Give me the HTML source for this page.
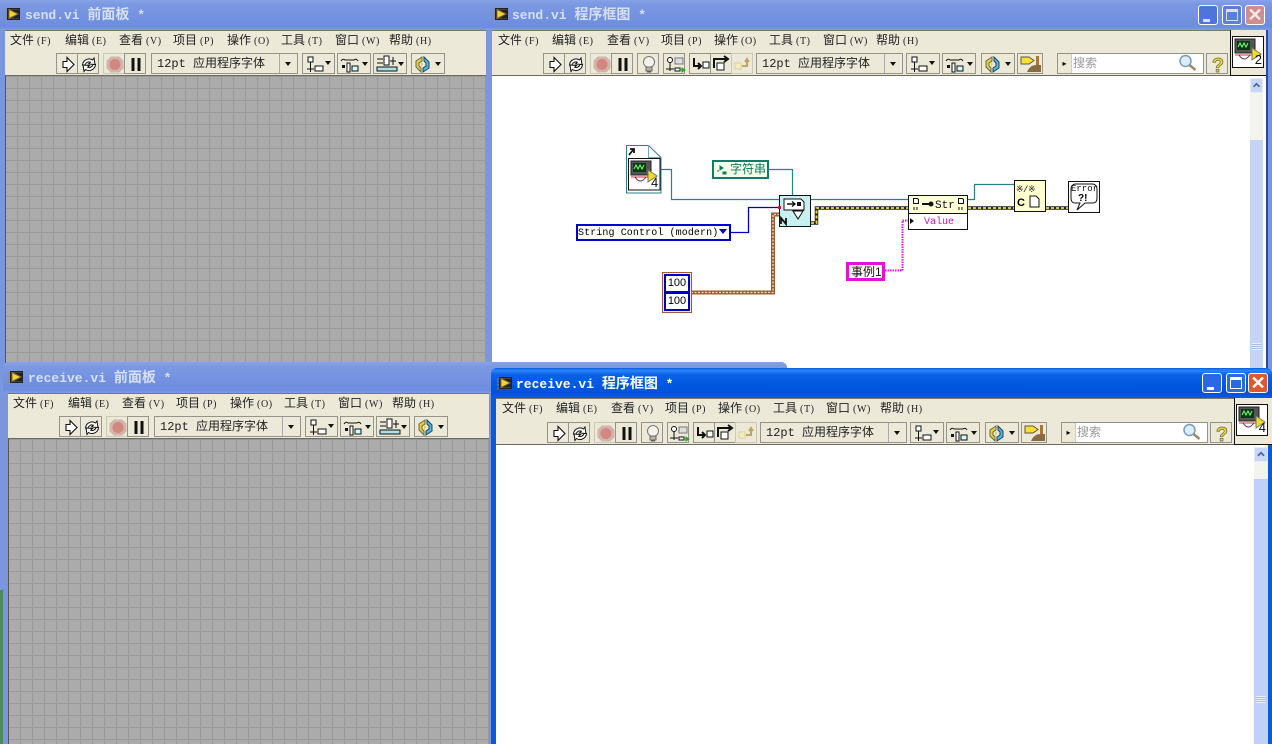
<!DOCTYPE html>
<html><head><meta charset="utf-8"><style>
html,body{margin:0;padding:0;width:1272px;height:744px;overflow:hidden;background:#7a96df}
*{box-sizing:border-box}
.win{position:absolute;overflow:hidden}
.tb{position:absolute;left:0;right:0;top:0;height:30px;background:linear-gradient(#86a2e8,#7b98e2 15%,#7391e0 60%,#6e8cdd 90%,#7f9be4)}
.tb.a{background:linear-gradient(#0a5ae0,#2a86f8 8%,#0b62e8 22%,#0057e0 60%,#0052d8 85%,#0a5ee8)}
.tt{position:absolute;top:6px;color:#d6e0f7;font:bold 13px/16px "Liberation Mono","Noto Sans CJK SC",monospace;white-space:pre}
.tb.a .tt{color:#fff}
.tt b{font:bold 14px/16px "Liberation Sans","Noto Sans CJK SC",sans-serif}
.menu{position:absolute;top:30px;height:21px;background:#ece9d8;border-top:1px solid #77776a}
.menu span{position:absolute;top:1px;font:12px/16px "Liberation Sans","Noto Sans CJK SC",sans-serif;color:#222;white-space:pre}
.menu i{font:normal 10px/16px "Liberation Serif",serif;letter-spacing:.6px;margin-left:3px}
.bar{position:absolute;top:51px;height:25px;background:#ece9d8;border-bottom:1px solid #6a6a60}
.b{position:absolute;top:2px;height:21px;border:1px solid #94948a;background:#ece9d8}
.b svg{position:absolute;left:0;top:0}
.ft{font:12px/19px "Liberation Mono","Noto Sans CJK SC",monospace;color:#222;padding-left:5px;white-space:pre}
.ft b{font:12px/19px "Liberation Sans","Noto Sans CJK SC",sans-serif}
.dd{position:absolute;right:0;top:0;bottom:0;width:18px;border-left:1px solid #aaa}
.dd:after{content:"";position:absolute;left:5px;top:8px;border:3px solid transparent;border-top:4px solid #111;border-bottom:0}
.grid{position:absolute;background-color:#ababab;background-image:repeating-linear-gradient(90deg,#9a9a9a 0 1px,transparent 1px 12px),repeating-linear-gradient(180deg,#9a9a9a 0 1px,transparent 1px 12px);background-position:-1px 0}
.wb{position:absolute;width:20px;height:20px;border-radius:3px;border:1px solid #fff}
.abs{position:absolute}
.dg{font:10px/14px "Liberation Mono",monospace;white-space:pre;color:#111}
.num{position:absolute;right:1px;top:16px;font:13px/14px "Liberation Sans",sans-serif;color:#111}
</style></head><body>
<svg width="0" height="0" style="position:absolute">
<symbol id="ti" viewBox="0 0 16 16"><rect x="2" y="2" width="13" height="12" fill="#222"/><path d="M0 4h2M0 7h2M0 10h2M0 13h2" stroke="#a83" /><path d="M3 3h11v1H3zM3 12h11v1H3z" fill="#443"/><path d="M4 3.500l9 4.500-9 4.500z" fill="#f2d81e" stroke="#865"/></symbol>
<symbol id="run" viewBox="0 0 22 21"><path d="M6 7.500h4V3.500l7 7-7 7v-4H6z" fill="#fff" stroke="#111" stroke-width="1.100"/></symbol>
<symbol id="cont" viewBox="0 0 22 21"><path d="M4.500 11a6.500 6.500 0 0 1 10-5l1.500-2 1 6.500-6.500-.5 1.800-1.800A4 4 0 0 0 7 11z" fill="#fff" stroke="#111"/><path d="M17.500 10.500a6.500 6.500 0 0 1-10 5L6 17.500 5 11l6.500.5-1.800 1.800A4 4 0 0 0 15 10.500z" fill="#fff" stroke="#111"/></symbol>
<symbol id="abort" viewBox="0 0 22 21"><path d="M7 3h8l4 4v7l-4 4H7l-4-4V7z" fill="#dcb0a8" stroke="#c4bcb0"/><circle cx="11" cy="10.500" r="5.500" fill="#d08880"/></symbol>
<symbol id="pause" viewBox="0 0 22 21"><path d="M6.500 4h3v13h-3zM12.500 4h3v13h-3z" fill="#111"/></symbol>
<symbol id="bulb" viewBox="0 0 22 21"><circle cx="11" cy="8" r="5.500" fill="#f4f2ea" stroke="#777"/><path d="M8 13h6v4H8z" fill="#b8b4a4" stroke="#666"/><path d="M9 18h4" stroke="#555"/></symbol>
<symbol id="probe" viewBox="0 0 22 21"><circle cx="6" cy="6" r="2.500" fill="#fff" stroke="#111"/><path d="M6 9v8M2 15h8" stroke="#111"/><path d="M11 4h8v6h-8z" fill="#ddd" stroke="#777"/><path d="M11 14h5v3h-5z" fill="#fff" stroke="#111"/><path d="M16 16h3M18 14l3 2-3 2z" fill="#2a2" stroke="#2a2"/></symbol>
<symbol id="si" viewBox="0 0 22 21"><path d="M4 4v8h6M8 9l3 3-3 3" fill="none" stroke="#111" stroke-width="2"/><rect x="13" y="8" width="6" height="6" fill="#fff" stroke="#111"/></symbol>
<symbol id="so" viewBox="0 0 22 21"><path d="M3 14V5h13M13 2l4 3-4 3" fill="none" stroke="#111" stroke-width="2"/><rect x="6" y="9" width="7" height="7" fill="#fff" stroke="#111"/></symbol>
<symbol id="se" viewBox="0 0 22 21"><rect x="3" y="9" width="6" height="6" fill="#f4eebc" stroke="#d8d098"/><path d="M10 12h5V6M13 8l2-3 2 3" fill="none" stroke="#b8a868" stroke-width="2"/></symbol>
<symbol id="align" viewBox="0 0 32 21"><rect x="5" y="3" width="5" height="5" fill="#fff" stroke="#111"/><path d="M7.500 8v10M4 15h7" stroke="#111"/><rect x="12" y="12" width="8" height="5" fill="#fff" stroke="#111"/><path d="M22 7l3 4 3-4z" fill="#111"/></symbol>
<symbol id="dist" viewBox="0 0 32 21"><path d="M3 7q2-3 4-1h9q2-2 4 1" fill="none" stroke="#111"/><path d="M4 11h3v3H4z" fill="#111"/><path d="M9 9h3v9H9z" fill="#fff" stroke="#111"/><path d="M14 12h6v5h-6z" fill="#cff" stroke="#111"/><path d="M24 8l3 4 3-4z" fill="#111"/></symbol>
<symbol id="res" viewBox="0 0 32 21"><path d="M3 5h6M3 9h6" stroke="#111"/><path d="M10 2h5v9h-5z" fill="#fff" stroke="#111"/><path d="M16 7h6M19 3v8" stroke="#111"/><path d="M3 13h20v4H3z" fill="#aee0e8" stroke="#111"/><path d="M24 8l3 4 3-4z" fill="#111"/></symbol>
<symbol id="reord" viewBox="0 0 32 21"><path d="M10 3L4 7v6l5 5v-4l-2-2V9l3-2z" fill="#e8d030" stroke="#665"/><path d="M11 18l6-4V8l-5-5v4l2 2v3l-3 2z" fill="#50b8e0" stroke="#245"/><path d="M9 8l2 2-2 3z" fill="#e8d030"/><path d="M23 8l3 4 3-4z" fill="#111"/></symbol>
<symbol id="clean" viewBox="0 0 26 21"><path d="M3 3h8l5 3.500-5 3.500H3z" fill="#f4e030" stroke="#654"/><path d="M18 2h3v9h-3z" fill="#a87838"/><path d="M10 16q3-5 8-5h5v7H9z" fill="#8a6a40"/></symbol>
<symbol id="help" viewBox="0 0 22 21"><text x="11" y="18" text-anchor="middle" font-family="Liberation Sans" font-weight="bold" font-size="20" fill="#eed820" stroke="#665" stroke-width=".7">?</text></symbol>
<symbol id="mag" viewBox="0 0 20 18"><circle cx="7.500" cy="7" r="5.500" fill="#dcecf8" stroke="#7a9ab8" stroke-width="1.500"/><path d="M11.500 11l6 5" stroke="#a08868" stroke-width="2.500"/></symbol>
<symbol id="vi" viewBox="0 0 30 30"><rect x="2" y="2" width="20" height="14" fill="#555" stroke="#222"/><rect x="4" y="4" width="13" height="9" fill="#0a3a12"/><path d="M5 10l2-4 2 4 2-4 2 4 2-4" stroke="#7f7" fill="none"/><path d="M2 18h26" stroke="#c33"/><path d="M6 18q5 8 11 0" stroke="#626" fill="none"/><path d="M19 11v12l9-6z" fill="#f2dc20" stroke="#776"/></symbol>
<symbol id="up" viewBox="0 0 13 15"><path d="M3 9l3.500-3.500L10 9" fill="none" stroke="#4a66a4" stroke-width="2"/></symbol>
</svg>

<!-- send front panel -->
<div class="win" style="left:0;top:0;width:487px;height:363px;background:#7a96df">
<div class="tb"><svg class="abs" style="left:5px;top:6px" width="16" height="16"><use href="#ti"/></svg><div class="tt" style="left:25px">send.vi <b>前面板</b> *</div></div>
<div class="menu" style="left:5px;width:481px"><span style="left:5px">文件<i>(F)</i></span><span style="left:60px">编辑<i>(E)</i></span><span style="left:114px">查看<i>(V)</i></span><span style="left:168px">项目<i>(P)</i></span><span style="left:222px">操作<i>(O)</i></span><span style="left:276px">工具<i>(T)</i></span><span style="left:330px">窗口<i>(W)</i></span><span style="left:384px">帮助<i>(H)</i></span></div>
<div class="bar" style="left:5px;width:481px">
<div class="b" style="left:51px;width:22px"><svg width="22" height="21"><use href="#run"/></svg></div><div class="b" style="left:72px;width:22px"><svg width="22" height="21"><use href="#cont"/></svg></div>
<div class="b" style="left:98px;width:22px;border-color:#ccc8b8"><svg width="22" height="21"><use href="#abort"/></svg></div><div class="b" style="left:119px;width:22px"><svg width="22" height="21"><use href="#pause"/></svg></div>
<div class="b ft" style="left:146px;width:147px">12pt <b>应用程序字体</b><div class="dd"></div></div>
<div class="b" style="left:297px;width:33px"><svg width="32" height="21"><use href="#align"/></svg></div><div class="b" style="left:332px;width:34px"><svg width="32" height="21"><use href="#dist"/></svg></div><div class="b" style="left:368px;width:34px"><svg width="32" height="21"><use href="#res"/></svg></div><div class="b" style="left:406px;width:34px"><svg width="32" height="21"><use href="#reord"/></svg></div></div>
<div class="grid" style="left:5px;top:76px;width:481px;height:290px;border-left:1px solid #555"></div>
</div>

<!-- send block diagram -->
<div class="win" style="left:487px;top:0;width:785px;height:368px;background:#7a96df">
<div class="tb"><svg class="abs" style="left:6px;top:6px" width="16" height="16"><use href="#ti"/></svg><div class="tt" style="left:25px">send.vi <b>程序框图</b> *</div>
<div class="wb" style="left:711px;top:5px;background:#4f74dc"><div class="abs" style="left:4px;top:13px;width:7px;height:3px;background:#dde"></div></div>
<div class="wb" style="left:735px;top:5px;background:#5a7fe0"><div class="abs" style="left:3px;top:3px;width:12px;height:12px;border:1px solid #dde;border-top-width:3px"></div></div>
<div class="wb" style="left:758px;top:5px;background:#cf8d8e;color:#f4eaea;font:bold 18px/18px 'Liberation Sans',sans-serif;text-align:center">✕</div></div>
<div class="menu" style="left:5px;width:776px"><span style="left:6px">文件<i>(F)</i></span><span style="left:60px">编辑<i>(E)</i></span><span style="left:115px">查看<i>(V)</i></span><span style="left:169px">项目<i>(P)</i></span><span style="left:222px">操作<i>(O)</i></span><span style="left:277px">工具<i>(T)</i></span><span style="left:331px">窗口<i>(W)</i></span><span style="left:384px">帮助<i>(H)</i></span></div>
<div class="bar" style="left:5px;width:776px">
<div class="b" style="left:51px;width:22px"><svg width="22" height="21"><use href="#run"/></svg></div><div class="b" style="left:72px;width:22px"><svg width="22" height="21"><use href="#cont"/></svg></div>
<div class="b" style="left:98px;width:22px;border-color:#ccc8b8"><svg width="22" height="21"><use href="#abort"/></svg></div><div class="b" style="left:119px;width:22px"><svg width="22" height="21"><use href="#pause"/></svg></div>
<div class="b" style="left:145px;width:22px"><svg width="22" height="21"><use href="#bulb"/></svg></div><div class="b" style="left:171px;width:22px"><svg width="22" height="21"><use href="#probe"/></svg></div>
<div class="b" style="left:197px;width:22px"><svg width="22" height="21"><use href="#si"/></svg></div><div class="b" style="left:218px;width:22px"><svg width="22" height="21"><use href="#so"/></svg></div><div class="b" style="left:239px;width:22px;border-color:#ccc8b8"><svg width="22" height="21"><use href="#se"/></svg></div>
<div class="b ft" style="left:264px;width:147px">12pt <b>应用程序字体</b><div class="dd"></div></div>
<div class="b" style="left:414px;width:34px"><svg width="32" height="21"><use href="#align"/></svg></div><div class="b" style="left:450px;width:34px"><svg width="32" height="21"><use href="#dist"/></svg></div><div class="b" style="left:489px;width:34px"><svg width="32" height="21"><use href="#reord"/></svg></div><div class="b" style="left:525px;width:26px"><svg width="26" height="21"><use href="#clean"/></svg></div>
<div class="b" style="left:565px;width:147px;background:#fff"><div class="abs" style="left:0;top:0;width:14px;height:19px;background:#ece9d8;border-right:1px solid #ccc;font:8px/19px sans-serif;text-align:center">▸</div><div class="abs" style="left:15px;top:1px;font:12px/17px 'Liberation Sans','Noto Sans CJK SC',sans-serif;color:#999">搜索</div><svg class="abs" style="left:120px;top:0" width="20" height="18"><use href="#mag"/></svg></div>
<div class="b" style="left:714px;width:22px"><svg width="22" height="21"><use href="#help"/></svg></div></div>
<div class="abs" style="left:743px;top:30px;width:38px;height:46px;background:#ece9d8;border-left:1px solid #111;border-bottom:1px solid #111"><div class="abs" style="left:1px;top:6px;width:32px;height:32px;background:#fff;border:1px solid #111"><svg width="30" height="30"><use href="#vi"/></svg><div class="num">2</div></div></div>
<div class="abs" style="left:5px;top:76px;width:774px;height:292px;background:#fff"></div>
<svg class="abs" style="left:763px;top:78px;background:#c9d7f6;border:1px solid #e4ebfa" width="13" height="15"><use href="#up"/></svg>
<div class="abs" style="left:763px;top:93px;width:13px;height:47px;background:#f4f4ee"></div>
<div class="abs" style="left:763px;top:140px;width:13px;height:228px;background:#c5d3f5"></div>
<div class="abs" style="left:765px;top:343px;width:9px;height:7px;background:repeating-linear-gradient(#eef 0 1px,#aabbe4 1px 2px)"></div>
<div class="abs" style="left:779px;top:30px;width:2px;height:338px;background:#2b48a8"></div>
</div>

<!-- diagram -->
<svg class="abs" style="left:0;top:0" width="1272" height="368" fill="none">
<path d="M661 169.500h10.500v30h108M769 169.500h23.500v26M811 199.500h97M968 199.500h6.500v-15h39.500" stroke="#2b7f86" stroke-width="1.200"/>
<path d="M731 232.500h17.500v-25h31" stroke="#0000c8" stroke-width="1.300"/>
<path d="M691 292.500h82v-78h6" stroke="#a05a30" stroke-width="4"/>
<path d="M691 292.500h82v-78h6" stroke="#f0e0c8" stroke-width="1.300" stroke-dasharray="2 1.500"/>
<path d="M811 223h5.500v-15h91.500M968 208h46M1046 208h22" stroke="#222" stroke-width="3.500"/>
<path d="M811 223h5.500v-15h91.500M968 208h46M1046 208h22" stroke="#e8e040" stroke-width="1.800" stroke-dasharray="3 2"/>
<path d="M885 270.500h17.500v-50h5.500" stroke="#e810d8" stroke-width="2" stroke-dasharray="1.500 1"/>
<path d="M626.500 145.500h22l12.500 12v35.500h-34.500z" fill="#fff" stroke="#2b7f86"/><path d="M648.500 145.500v12h12" stroke="#7aa"/>
<path d="M629 155l4-5M630 149h4v4" stroke="#111" stroke-width="1.800"/>
<rect x="628.500" y="158.500" width="31.500" height="31.500" fill="#fff" stroke="#111"/>
</svg>
<svg class="abs" style="left:629px;top:159px" width="30" height="30"><use href="#vi"/></svg>
<div class="abs" style="left:651px;top:176px;font:13px/14px 'Liberation Sans',sans-serif;color:#111">4</div>
<div class="abs" style="left:712px;top:160px;width:57px;height:19px;background:#f4fbe8;border:2px solid #0f7c66;font:12px/15px 'Liberation Sans','Noto Sans CJK SC',sans-serif;color:#0e7a5f;padding-left:16px">字符串<svg class="abs" style="left:2px;top:3px" width="12" height="10"><path d="M1 6h2M4 1l3 2-3 2zM7 7h3v2H7z" fill="#0e7a5f" stroke="#0e7a5f"/></svg></div>
<div class="abs dg" style="left:576px;top:224px;width:155px;height:17px;background:#fff;border:2px solid #0000c8;line-height:15px;padding-left:0;font-size:10px;letter-spacing:.1px;color:#000">String Control (modern)<div class="abs" style="right:2px;top:3px;border:4px solid transparent;border-top:5px solid #0000c8;border-bottom:0"></div></div>
<div class="abs" style="left:662px;top:272px;width:30px;height:41px;background:#f4e8d8;border:1px solid #a05a30;padding:1px"><div style="width:26px;height:37px;background:#0000c0;padding:2px 2px"><div style="height:15px;background:#fff;font:11px/15px 'Liberation Sans',sans-serif;text-align:center;color:#000;margin-bottom:3px">100</div><div style="height:15px;background:#fff;font:11px/15px 'Liberation Sans',sans-serif;text-align:center;color:#000">100</div></div></div>
<div class="abs" style="left:779px;top:195px;width:32px;height:32px;background:#c8f0f2;border:1px solid #111"><svg width="30" height="30"><path d="M4 3h17l3 3v8H4z" fill="#fff" stroke="#111"/><path d="M7 8h7M12 5.500l3 2.500-3 2.500" stroke="#111" fill="none" stroke-width="1.400"/><rect x="17" y="6" width="4" height="4" fill="#111"/><path d="M13 15h10l-5 8z" fill="#fff" stroke="#111"/><path d="M1 28v-6l5 6v-6" stroke="#111" stroke-width="1.800" fill="none"/></svg></div>
<div class="abs" style="left:778px;top:206px;width:3px;height:3px;background:#c02040"></div>
<div class="abs" style="left:908px;top:195px;width:60px;height:35px;background:#fff;border:1px solid #111"><div class="abs" style="left:0;top:0;width:58px;height:18px;background:#ffffd8;border-bottom:1px solid #111"><svg class="abs" style="left:2px;top:1px" width="56" height="16"><path d="M2.500 1.500h4l1 1v4h-5zM47.500 1.500h4l1 1v4h-5z" fill="#fff" stroke="#111"/><path d="M3 10v3M6 10v3M48 10v3M51 10v3" stroke="#111"/><path d="M11 7h9" stroke="#111" stroke-width="2"/><circle cx="20" cy="7" r="2.500" fill="#111"/></svg><div class="abs dg" style="left:26px;top:3px;font-size:11px">Str</div></div><div class="abs dg" style="left:15px;top:20px;color:#d010c0">Value</div><div class="abs" style="left:1px;top:22px;border:3px solid transparent;border-left:4px solid #111"></div></div>
<div class="abs" style="left:1014px;top:180px;width:32px;height:32px;background:#ffffd0;border:1px solid #111"><div class="abs dg" style="left:1px;top:2px;font-size:9px;letter-spacing:-.5px">※/※</div><div class="abs" style="left:2px;top:15px;font:bold 11px/14px 'Liberation Sans',sans-serif">C</div><svg class="abs" style="left:13px;top:14px" width="14" height="14"><path d="M2 1h6l3 3v8H2z" fill="#fff" stroke="#111"/></svg></div>
<div class="abs" style="left:1068px;top:181px;width:32px;height:32px;background:#fff;border:1px solid #111"><svg class="abs" style="left:0;top:0" width="30" height="30"><path d="M6 2h18q4 1 4 5v9q0 5-4 5H16l-8 7 3-7H6q-4 0-4-5V7q0-4 4-5z" fill="#fff" stroke="#111"/></svg><div class="abs dg" style="left:2px;top:2px;font-size:9px;line-height:10px">Error</div><div class="abs" style="left:9px;top:11px;font:bold 10px/11px 'Liberation Sans',sans-serif">?!</div></div>
<div class="abs" style="left:846px;top:262px;width:39px;height:19px;background:#fff;border:3px solid #e810d8;font:12px/14px 'Liberation Sans','Noto Sans CJK SC',sans-serif;color:#111;padding-left:2px;white-space:nowrap">事例1</div>

<!-- receive front panel -->
<div class="win" style="left:3px;top:362px;width:784px;height:382px;background:#7a96df;border-radius:6px 6px 0 0">
<div class="tb" style="top:0;height:31px"><svg class="abs" style="left:5px;top:7px" width="16" height="16"><use href="#ti"/></svg><div class="tt" style="left:25px;top:7px">receive.vi <b>前面板</b> *</div></div>
<div class="menu" style="left:5px;width:481px;top:31px"><span style="left:5px">文件<i>(F)</i></span><span style="left:60px">编辑<i>(E)</i></span><span style="left:114px">查看<i>(V)</i></span><span style="left:168px">项目<i>(P)</i></span><span style="left:222px">操作<i>(O)</i></span><span style="left:276px">工具<i>(T)</i></span><span style="left:330px">窗口<i>(W)</i></span><span style="left:384px">帮助<i>(H)</i></span></div>
<div class="bar" style="left:5px;width:481px;top:52px">
<div class="b" style="left:51px;width:22px"><svg width="22" height="21"><use href="#run"/></svg></div><div class="b" style="left:72px;width:22px"><svg width="22" height="21"><use href="#cont"/></svg></div>
<div class="b" style="left:98px;width:22px;border-color:#ccc8b8"><svg width="22" height="21"><use href="#abort"/></svg></div><div class="b" style="left:119px;width:22px"><svg width="22" height="21"><use href="#pause"/></svg></div>
<div class="b ft" style="left:146px;width:147px">12pt <b>应用程序字体</b><div class="dd"></div></div>
<div class="b" style="left:297px;width:33px"><svg width="32" height="21"><use href="#align"/></svg></div><div class="b" style="left:332px;width:34px"><svg width="32" height="21"><use href="#dist"/></svg></div><div class="b" style="left:368px;width:34px"><svg width="32" height="21"><use href="#res"/></svg></div><div class="b" style="left:406px;width:34px"><svg width="32" height="21"><use href="#reord"/></svg></div></div>
<div class="grid" style="left:5px;top:77px;width:481px;height:305px;border-left:1px solid #555"></div>
</div>
<div class="abs" style="left:0;top:590px;width:3px;height:154px;background:#4f8a5a"></div>

<!-- receive block diagram -->
<div class="win" style="left:491px;top:368px;width:781px;height:376px;background:#0a5ae0;border-radius:6px 6px 0 0">
<div class="tb a"><svg class="abs" style="left:6px;top:7px" width="16" height="16"><use href="#ti"/></svg><div class="tt" style="left:25px;top:7px">receive.vi <b>程序框图</b> *</div>
<div class="wb" style="left:711px;top:5px;background:#2a68e8"><div class="abs" style="left:4px;top:13px;width:7px;height:3px;background:#fff"></div></div>
<div class="wb" style="left:735px;top:5px;background:#2a68e8"><div class="abs" style="left:3px;top:3px;width:12px;height:12px;border:1px solid #fff;border-top-width:3px"></div></div>
<div class="wb" style="left:757px;top:5px;background:#e0582e;color:#fff;font:bold 18px/18px 'Liberation Sans',sans-serif;text-align:center">✕</div></div>
<div class="menu" style="left:5px;width:776px;height:22px"><span style="left:6px">文件<i>(F)</i></span><span style="left:60px">编辑<i>(E)</i></span><span style="left:115px">查看<i>(V)</i></span><span style="left:169px">项目<i>(P)</i></span><span style="left:222px">操作<i>(O)</i></span><span style="left:277px">工具<i>(T)</i></span><span style="left:330px">窗口<i>(W)</i></span><span style="left:384px">帮助<i>(H)</i></span></div>
<div class="bar" style="left:5px;width:776px;top:52px">
<div class="b" style="left:51px;width:22px"><svg width="22" height="21"><use href="#run"/></svg></div><div class="b" style="left:72px;width:22px"><svg width="22" height="21"><use href="#cont"/></svg></div>
<div class="b" style="left:98px;width:22px;border-color:#ccc8b8"><svg width="22" height="21"><use href="#abort"/></svg></div><div class="b" style="left:119px;width:22px"><svg width="22" height="21"><use href="#pause"/></svg></div>
<div class="b" style="left:145px;width:22px"><svg width="22" height="21"><use href="#bulb"/></svg></div><div class="b" style="left:171px;width:22px"><svg width="22" height="21"><use href="#probe"/></svg></div>
<div class="b" style="left:197px;width:22px"><svg width="22" height="21"><use href="#si"/></svg></div><div class="b" style="left:218px;width:22px"><svg width="22" height="21"><use href="#so"/></svg></div><div class="b" style="left:239px;width:22px;border-color:#ccc8b8"><svg width="22" height="21"><use href="#se"/></svg></div>
<div class="b ft" style="left:264px;width:147px">12pt <b>应用程序字体</b><div class="dd"></div></div>
<div class="b" style="left:414px;width:34px"><svg width="32" height="21"><use href="#align"/></svg></div><div class="b" style="left:450px;width:34px"><svg width="32" height="21"><use href="#dist"/></svg></div><div class="b" style="left:489px;width:34px"><svg width="32" height="21"><use href="#reord"/></svg></div><div class="b" style="left:525px;width:26px"><svg width="26" height="21"><use href="#clean"/></svg></div>
<div class="b" style="left:565px;width:147px;background:#fff"><div class="abs" style="left:0;top:0;width:14px;height:19px;background:#ece9d8;border-right:1px solid #ccc;font:8px/19px sans-serif;text-align:center">▸</div><div class="abs" style="left:15px;top:1px;font:12px/17px 'Liberation Sans','Noto Sans CJK SC',sans-serif;color:#999">搜索</div><svg class="abs" style="left:120px;top:0" width="20" height="18"><use href="#mag"/></svg></div>
<div class="b" style="left:714px;width:22px"><svg width="22" height="21"><use href="#help"/></svg></div></div>
<div class="abs" style="left:743px;top:30px;width:38px;height:47px;background:#ece9d8;border-left:1px solid #111;border-bottom:1px solid #111"><div class="abs" style="left:1px;top:6px;width:32px;height:32px;background:#fff;border:1px solid #111"><svg width="30" height="30"><use href="#vi"/></svg><div class="num">4</div></div></div>
<div class="abs" style="left:5px;top:77px;width:772px;height:299px;background:#fff"></div>
<svg class="abs" style="left:763px;top:79px;background:#c9d7f6;border:1px solid #e4ebfa" width="14" height="15"><use href="#up"/></svg>
<div class="abs" style="left:763px;top:94px;width:14px;height:17px;background:#f4f4ee"></div>
<div class="abs" style="left:763px;top:111px;width:14px;height:265px;background:#c0d0f8"></div>
<div class="abs" style="left:765px;top:328px;width:10px;height:7px;background:repeating-linear-gradient(#eef 0 1px,#aabbe4 1px 2px)"></div>
</div>
</body></html>
